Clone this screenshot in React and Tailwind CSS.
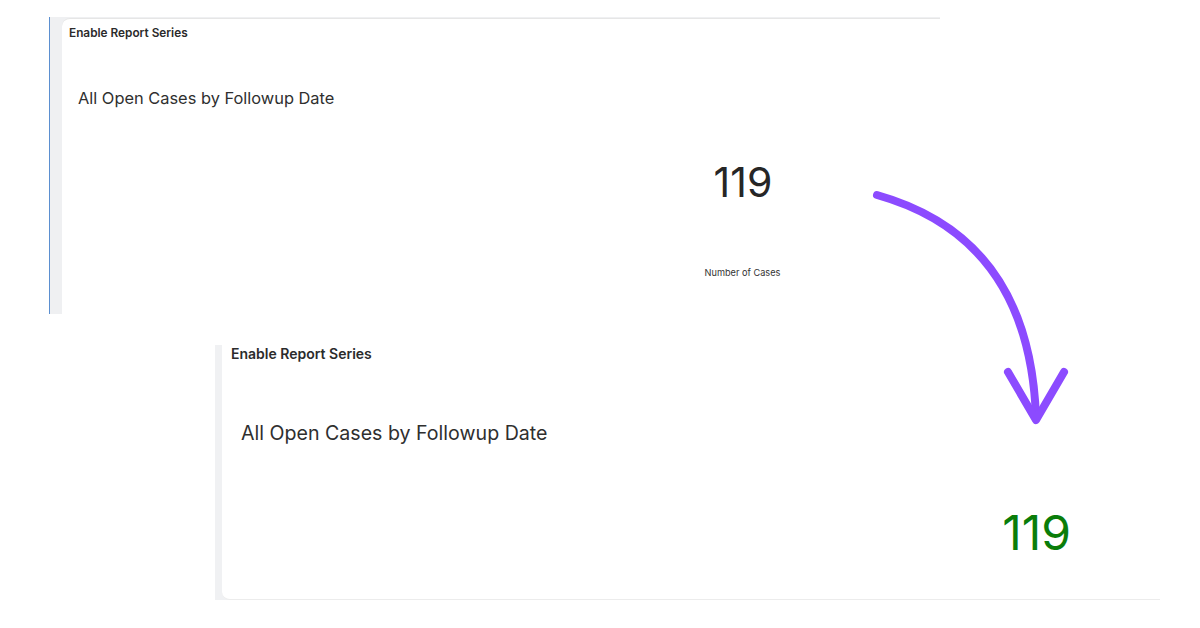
import React from 'react';

const CurvedArrow = () => (
  <svg
    className="absolute inset-0 pointer-events-none"
    width="1200"
    height="628"
    viewBox="0 0 1200 628"
    fill="none"
  >
    <path
      d="M877 195 Q1030 238 1036 418"
      stroke="#8c4bff"
      strokeWidth="8"
      strokeLinecap="round"
      fill="none"
    />
    <path
      d="M1008 372 L1036 420 L1064 372"
      stroke="#8c4bff"
      strokeWidth="8"
      strokeLinecap="round"
      strokeLinejoin="round"
      fill="none"
    />
  </svg>
);

const App = () => {
  return (
    <div className="relative w-[1200px] h-[628px] bg-white overflow-hidden font-['Inter',sans-serif]">
      {/* before */}
      <div className="pt-[17px] pl-[49px]">
        <div className="flex w-[891px] h-[297px] border-l border-[#5b8fd0] bg-[#eff0f2] pl-[12px]">
          <div className="flex-1 flex flex-col bg-white rounded-tl-[8px] border-t border-[#e6e6e6] mt-px">
            <p className="pl-[7px] pt-[7px] text-[11.8px] leading-[14px] font-semibold text-[#2b2b2b]">
              Enable Report Series
            </p>
            <p className="ml-[16px] mt-[48px] text-[16.4px] leading-[20px] text-[#2f2f2f]">
              All Open Cases by Followup Date
            </p>
            <div className="ml-[620px] w-[120px] text-center">
              <p className="mt-[50px] pl-[2px] text-[41px] leading-[48px] text-[#262626]">119</p>
              <p className="mt-[61px] pl-px text-[9.2px] leading-[12px] text-[#333]">Number of Cases</p>
            </div>
          </div>
        </div>
      </div>

      {/* after */}
      <div className="pt-[31px] pl-[215px]">
        <div className="flex w-[945px] h-[255px] bg-[#f0f1f3] pl-[7px]">
          <div className="flex-1 flex flex-col bg-white rounded-bl-[8px] border-b border-[#ececec]">
            <p className="pl-[9px] pt-px text-[14px] leading-[16px] font-semibold text-[#2b2b2b]">
              Enable Report Series
            </p>
            <p className="ml-[19px] mt-[59px] text-[19.6px] leading-[24px] text-[#2f2f2f]">
              All Open Cases by Followup Date
            </p>
            <div className="flex justify-end pr-[89px]">
              <p className="mt-[60px] text-[48px] leading-[56px] text-[#0a7d0a]">119</p>
            </div>
          </div>
        </div>
      </div>

      <CurvedArrow />
    </div>
  );
};

export default App;
